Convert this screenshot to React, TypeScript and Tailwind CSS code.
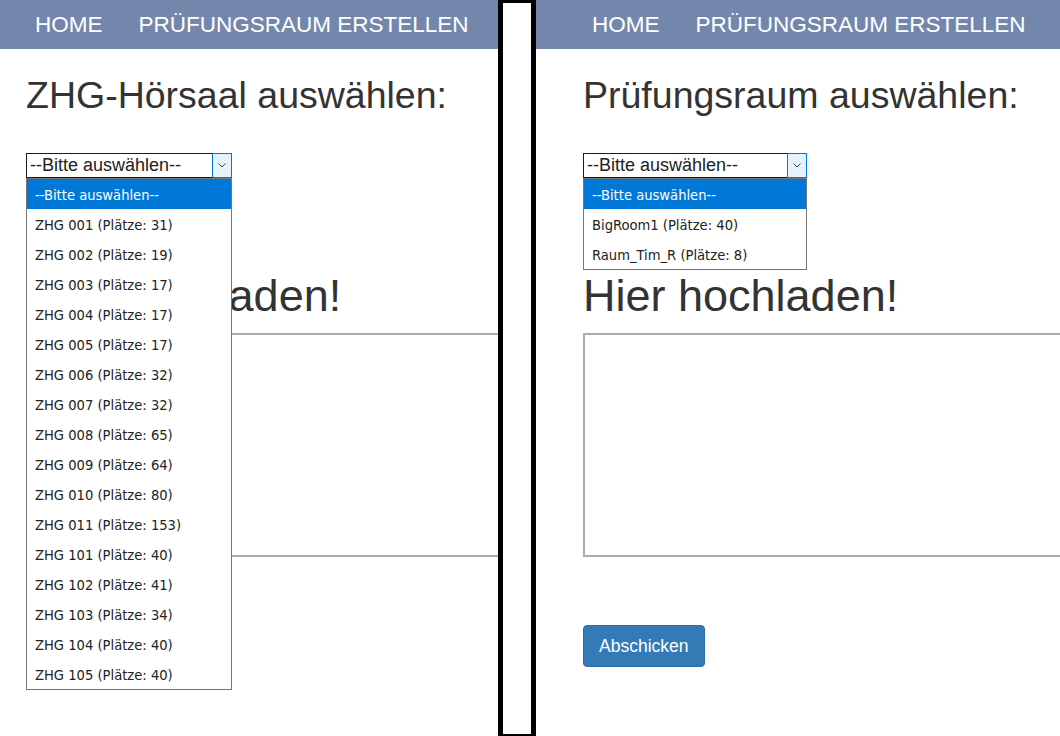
import React from 'react';

const zhgRooms: [string, number][] = [
  ['001', 31], ['002', 19], ['003', 17], ['004', 17], ['005', 17], ['006', 32],
  ['007', 32], ['008', 65], ['009', 64], ['010', 80], ['011', 153], ['101', 40],
  ['102', 41], ['103', 34], ['104', 40], ['105', 40],
];

const zhgOptions = ['--Bitte auswählen--', ...zhgRooms.map(([nr, seats]) => `ZHG ${nr} (Plätze: ${seats})`)];
const examOptions = ['--Bitte auswählen--', 'BigRoom1 (Plätze: 40)', 'Raum_Tim_R (Plätze: 8)'];

const NavBar: React.FC<{ padClass: string }> = ({ padClass }) => (
  <nav className={`h-[49px] shrink-0 bg-[#7387ad] flex items-center gap-[36px] text-[22.5px] text-white uppercase ${padClass}`}>
    <span>Home</span>
    <span>Prüfungsraum erstellen</span>
  </nav>
);

const RoomSelect: React.FC<{ widthClass: string; options: string[] }> = ({ widthClass, options }) => (
  <div className={`relative mt-[37px] ${widthClass}`}>
    <div className="h-[25px] flex bg-white">
      <div className="flex-1 border-y border-l border-[#1a1a1a] pl-[3px] text-[18px] leading-[23px] text-[#222]">
        --Bitte auswählen--
      </div>
      <div className="w-[20px] border border-[#0078d7] bg-[#e5f1fb] flex items-center justify-center">
        <svg width="8" height="5" viewBox="0 0 8 5" fill="none">
          <path d="M0.5 0.5 L4 4 L7.5 0.5" stroke="#444" strokeWidth="1" />
        </svg>
      </div>
    </div>
    {/* opened native list, lies over the content below */}
    <ul className="absolute left-0 top-full z-10 w-full border border-[#767676] bg-white font-['DejaVu_Sans_Condensed','DejaVu_Sans',sans-serif] text-[14.6px] text-[#222]">
      {options.map((opt, i) => (
        <li
          key={opt}
          className={
            i === 0
              ? 'h-[30px] flex items-center pl-[8px] pt-[1px] bg-[#0078d7] text-white'
              : 'h-[30px] flex items-center pl-[8px] pt-[1px]'
          }
        >
          {opt}
        </li>
      ))}
    </ul>
  </div>
);

const Panel: React.FC<{ navPad: string; bodyPad: string; title: string; selectWidth: string; options: string[] }> = ({
  navPad,
  bodyPad,
  title,
  selectWidth,
  options,
}) => (
  <div className="h-full flex flex-col overflow-hidden">
    <NavBar padClass={navPad} />
    <div className={`flex-1 ${bodyPad}`}>
      <h1 className="mt-[26px] text-[37.5px] leading-[41px] text-[#333] whitespace-nowrap">{title}</h1>
      <RoomSelect widthClass={selectWidth} options={options} />
      <h2 className="mt-[93px] text-[45px] leading-[50px] text-[#333] whitespace-nowrap">Hier hochladen!</h2>
      <div className="mt-[12px] h-[224px] w-[640px] border-2 border-[#ababab] bg-white" />
      <button className="mt-[68px] h-[42px] px-[15px] rounded-[4px] border border-[#2e6da4] bg-[#337ab7] text-[17.5px] text-white">
        Abschicken
      </button>
    </div>
  </div>
);

export default function App() {
  return (
    <div className="w-[1060px] h-[736px] flex overflow-hidden bg-white font-['Liberation_Sans',Arial,sans-serif]">
      <div className="w-[498px] shrink-0 h-full">
        <Panel
          navPad="pl-[35px]"
          bodyPad="pl-[26px]"
          title="ZHG-Hörsaal auswählen:"
          selectWidth="w-[206px]"
          options={zhgOptions}
        />
      </div>
      <div className="w-[38px] shrink-0 h-full border-x-[5px] border-t-[3px] border-b-[2px] border-black bg-white" />
      <div className="flex-1 min-w-0 h-full">
        <Panel
          navPad="pl-[56px]"
          bodyPad="pl-[47px]"
          title="Prüfungsraum auswählen:"
          selectWidth="w-[224px]"
          options={examOptions}
        />
      </div>
    </div>
  );
}
